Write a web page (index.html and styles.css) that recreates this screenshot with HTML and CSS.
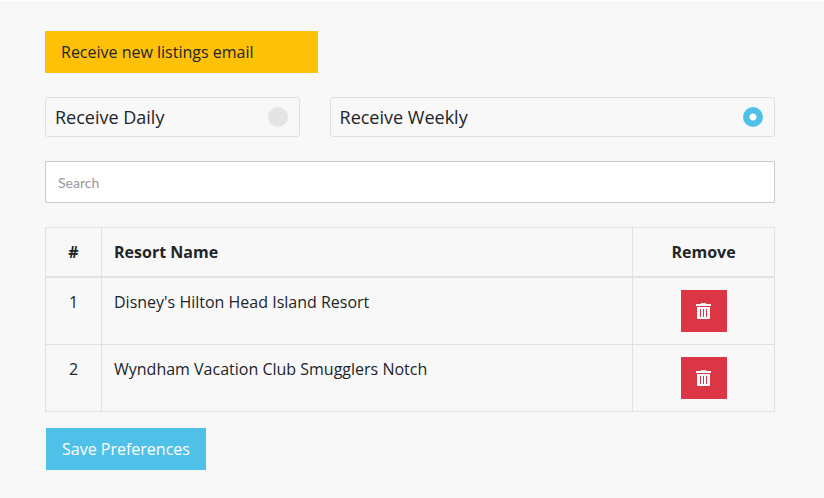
FILE: index.html
```
<!DOCTYPE html>
<html lang="en">
	<head>
		<meta charset="utf-8">
		<title>Email Preferences</title>
		<meta name="viewport" content="width=device-width, initial-scale=1">
		<link rel="stylesheet" href="styles.css">
	</head>
	<body>
		<form class="preferences">
			<h1 class="banner">Receive new listings email</h1>

			<div class="options">
				<label class="option">
					<span>Receive Daily</span>
					<input type="radio" name="frequency" value="daily">
				</label>
				<label class="option">
					<span>Receive Weekly</span>
					<input type="radio" name="frequency" value="weekly" checked>
				</label>
			</div>

			<input type="search" class="search" placeholder="Search" aria-label="Search">

			<table class="resorts">
				<thead>
					<tr>
						<th class="number">#</th>
						<th>Resort Name</th>
						<th class="remove">Remove</th>
					</tr>
				</thead>
				<tbody>
					<tr>
						<td class="number">1</td>
						<td>Disney's Hilton Head Island Resort</td>
						<td class="remove">
							<button type="button" class="btn btn-danger" aria-label="Remove">
								<svg width="15" height="16" viewBox="0 0 15 16">
									<path fill="#fff" fill-rule="evenodd" d="M0 1h4.5L5.5 0h4l1 1H15v2H0zM1 4h13v11q0 1-1 1H2q-1 0-1-1zM4 6v8h1V6zM7 6v8h1V6zM10 6v8h1V6z"/>
								</svg>
							</button>
						</td>
					</tr>
					<tr>
						<td class="number">2</td>
						<td>Wyndham Vacation Club Smugglers Notch</td>
						<td class="remove">
							<button type="button" class="btn btn-danger" aria-label="Remove">
								<svg width="15" height="16" viewBox="0 0 15 16">
									<path fill="#fff" fill-rule="evenodd" d="M0 1h4.5L5.5 0h4l1 1H15v2H0zM1 4h13v11q0 1-1 1H2q-1 0-1-1zM4 6v8h1V6zM7 6v8h1V6zM10 6v8h1V6z"/>
								</svg>
							</button>
						</td>
					</tr>
				</tbody>
			</table>

			<button type="submit" class="btn btn-save">Save Preferences</button>
		</form>
	</body>
</html>
```

FILE: styles.css
```
* {
	box-sizing: border-box;
}

body {
	margin: 0;
	border-top: 1px solid #fff;
	background-color: #f8f8f8;
	color: #212529;
	font-family: "Open Sans", Arial, sans-serif;
	font-size: 16px;
	line-height: 24px;
}

.preferences {
	display: flex;
	flex-direction: column;
	align-items: flex-start;
	gap: 24px;
	padding: 30px 49px 28px 45px;
}

.banner {
	margin: 0;
	padding: 9px 64px 9px 16px;
	background-color: #ffc107;
	font-size: 16px;
	font-weight: 400;
}

.options {
	display: grid;
	grid-template-columns: 4fr 7fr;
	gap: 30px;
	width: 100%;
}

.option {
	display: flex;
	align-items: center;
	justify-content: space-between;
	height: 40px;
	padding: 0px 11px 0px 9px;
	border: 1px solid #dfdfdf;
	border-radius: 3px;
	font-size: 18px;
	cursor: pointer;
}

.option input {
	appearance: none;
	width: 20px;
	height: 20px;
	margin: 0;
	border-radius: 50%;
	background-color: #e4e4e4;
	cursor: pointer;
}

.option input:checked {
	background: radial-gradient(circle, #fff 3px, #4fc1e9 4px);
}

.search {
	appearance: none;
	width: 100%;
	height: 42px;
	margin: 0;
	padding: 0px 12px;
	border: 1px solid #c8cacc;
	border-radius: 1px;
	background-color: #fff;
	font-family: Lato, sans-serif;
	font-size: 14px;
}

.search::placeholder {
	color: #999;
}

.resorts {
	width: 100%;
	border-collapse: collapse;
}

.resorts th,
.resorts td {
	padding: 12px;
	border: 1px solid #dfe1e3;
	text-align: left;
	vertical-align: top;
}

.resorts th {
	border-bottom-width: 2px;
	font-weight: 700;
}

.resorts .number {
	width: 56px;
	text-align: center;
}

.resorts .remove {
	width: 142px;
	text-align: center;
}

.btn {
	display: inline-block;
	height: 42px;
	padding: 0px 16px;
	border: none;
	color: #fff;
	font-family: inherit;
	font-size: 16px;
	vertical-align: top;
	cursor: pointer;
}

.btn svg {
	display: block;
}

.btn-danger {
	padding: 0px 16px 0px 15px;
	background-color: #dc3545;
}

.btn-save {
	margin: -8px 1px 0px;
	background-color: #4fc1e9;
}
```
